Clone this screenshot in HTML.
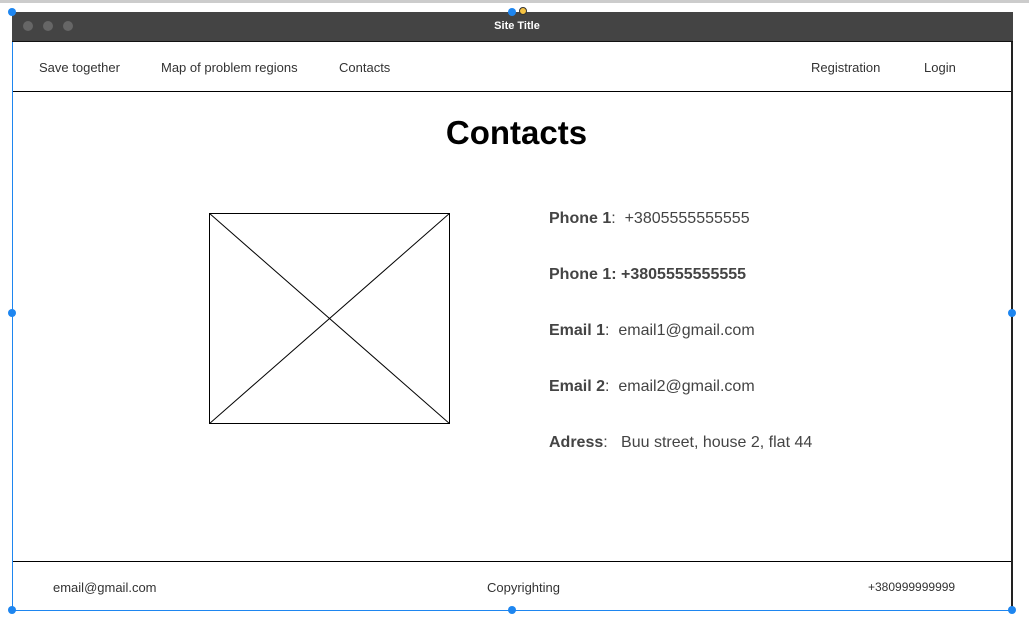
<!DOCTYPE html>
<html><head><meta charset="utf-8"><style>
*{margin:0;padding:0;box-sizing:border-box}
body{width:1029px;height:625px;background:#fff;position:relative;overflow:hidden;font-family:"Liberation Sans",sans-serif;color:#333}
.a{position:absolute}
</style></head><body>
<div class="a" style="left:0;top:0;width:1029px;height:3px;background:#ccc"></div>
<div class="a" style="left:12px;top:12px;width:1001px;height:599px;border:1px solid #1e86f0;border-top:none"></div>
<div class="a" style="left:12px;top:12px;width:1001px;height:30px;background:#444;border-bottom:1px solid #111"></div>
<div class="a" style="left:23px;top:21px;width:10px;height:10px;border-radius:50%;background:#666"></div>
<div class="a" style="left:43px;top:21px;width:10px;height:10px;border-radius:50%;background:#666"></div>
<div class="a" style="left:63px;top:21px;width:10px;height:10px;border-radius:50%;background:#666"></div>
<div class="a" style="left:462px;top:20px;width:110px;text-align:center;color:#fff;font-size:11px;font-weight:bold">Site Title</div>
<div class="a" style="left:13px;top:91px;width:999px;height:1px;background:#000"></div>
<div class="a" style="left:13px;top:561px;width:999px;height:1px;background:#000"></div>
<div class="a" style="left:1011px;top:42px;width:2px;height:568px;background:#222"></div>
<div class="a" style="font-size:13px;left:39px;top:60px">Save together</div>
<div class="a" style="font-size:13px;left:161px;top:60px">Map of problem regions</div>
<div class="a" style="font-size:13px;left:339px;top:60px">Contacts</div>
<div class="a" style="font-size:13px;left:811px;top:60px">Registration</div>
<div class="a" style="font-size:13px;left:924px;top:60px">Login</div>
<div class="a" style="left:0;width:1029px;text-align:center;top:114px;font-size:33px;font-weight:bold;color:#000;padding-left:4px">Contacts</div>
<svg class="a" style="left:209px;top:213px" width="241" height="211"><rect x="0.5" y="0.5" width="240" height="210" fill="none" stroke="#000"/><line x1="0" y1="0" x2="241" y2="211" stroke="#000"/><line x1="241" y1="0" x2="0" y2="211" stroke="#000"/></svg>
<div class="a" style="left:549px;top:210px;font-size:16px;color:#444"><b>Phone 1</b>:&nbsp; +3805555555555</div>
<div class="a" style="left:549px;top:266px;font-size:16px;color:#444;font-weight:bold">Phone 1: +3805555555555</div>
<div class="a" style="left:549px;top:322px;font-size:16px;color:#444"><b>Email 1</b>:&nbsp; email1@gmail.com</div>
<div class="a" style="left:549px;top:378px;font-size:16px;color:#444"><b>Email 2</b>:&nbsp; email2@gmail.com</div>
<div class="a" style="left:549px;top:434px;font-size:16px;color:#444"><b>Adress</b>:&nbsp;&nbsp; Buu street, house 2, flat 44</div>
<div class="a" style="font-size:13px;left:53px;top:580px">email@gmail.com</div>
<div class="a" style="font-size:13px;left:487px;top:580px">Copyrighting</div>
<div class="a" style="font-size:12px;left:868px;top:580px">+380999999999</div>
<div class="a" style="left:8px;top:8px;width:8px;height:8px;border-radius:50%;background:#1e86f0"></div>
<div class="a" style="left:508px;top:8px;width:8px;height:8px;border-radius:50%;background:#1e86f0"></div>
<div class="a" style="left:519px;top:7px;width:8px;height:8px;border-radius:50%;background:#f5c242;border:1px solid #333"></div>
<div class="a" style="left:8px;top:309px;width:8px;height:8px;border-radius:50%;background:#1e86f0"></div>
<div class="a" style="left:1008px;top:309px;width:8px;height:8px;border-radius:50%;background:#1e86f0"></div>
<div class="a" style="left:8px;top:606px;width:8px;height:8px;border-radius:50%;background:#1e86f0"></div>
<div class="a" style="left:508px;top:606px;width:8px;height:8px;border-radius:50%;background:#1e86f0"></div>
<div class="a" style="left:1008px;top:606px;width:8px;height:8px;border-radius:50%;background:#1e86f0"></div>
</body></html>
